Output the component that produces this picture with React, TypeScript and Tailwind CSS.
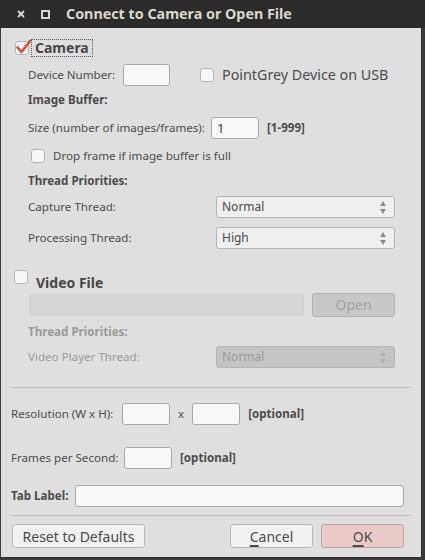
import { useState } from 'react';

const font = { fontFamily: '"Noto Sans", "DejaVu Sans", sans-serif' };

function Check({ checked, className = '' }: { checked?: boolean; className?: string }) {
	return (
		<div
			className={
				'relative w-[14px] h-[14px] rounded-[3px] border border-[#b5b5b5] bg-[#f7f7f7] shrink-0 ' + className
			}
		>
			{checked && (
				<svg className="absolute -left-[1px] -top-[3px]" width="18" height="16" viewBox="0 0 18 16">
					<path d="M2.5 8.5 L6.5 13 L15 2" fill="none" stroke="#df4a3a" strokeWidth="2.6" strokeLinecap="round" strokeLinejoin="round" />
				</svg>
			)}
		</div>
	);
}

function Field({ w, value = '' }: { w: string; value?: string }) {
	return (
		<div className={'h-[22px] shrink-0 rounded-[3px] border border-[#a9a9a9] bg-[#f8f8f8] px-[5px] text-[13px] leading-[20px] text-[#3c3c3c] ' + w}>
			{value}
		</div>
	);
}

function Combo({ value, disabled }: { value: string; disabled?: boolean }) {
	const c = disabled ? '#b0b0b0' : '#8a8a8a';
	return (
		<div
			className={
				'ml-auto w-[179px] h-[22px] rounded-[3px] border flex items-center px-[5px] text-[12px] ' +
				(disabled ? 'bg-[#c4c4c4] border-[#b4b4b4] text-[#9c9c9c]' : 'bg-[#efefef] border-[#b3b3b3] text-[#4a4a4a]')
			}
		>
			<span>{value}</span>
			<div className="ml-auto flex flex-col items-center gap-[3px] mr-[3px]">
				<svg width="6" height="5" viewBox="0 0 6 5">
					<path d="M3 0 L6 5 L0 5 Z" fill={c} />
				</svg>
				<svg width="6" height="5" viewBox="0 0 6 5">
					<path d="M0 0 L6 0 L3 5 Z" fill={c} />
				</svg>
			</div>
		</div>
	);
}

function Button({ children, className = '' }: { children: React.ReactNode; className?: string }) {
	return (
		<div
			className={
				'h-[24px] rounded-[3px] border flex items-center justify-center text-[14px] ' + className
			}
		>
			{children}
		</div>
	);
}

export default function App() {
	const [tab] = useState('');
	return (
		<div className="w-[425px] h-[560px] bg-[#3a3a3a] overflow-hidden" style={font}>
			{/* title bar */}
			<div className="h-[28px] bg-[#2b2b2b] flex items-center text-[#dcdcdc]">
				<svg className="ml-[17px]" width="8" height="8" viewBox="0 0 8 8">
					<path d="M1 1 L7 7 M7 1 L1 7" stroke="#dcdcdc" strokeWidth="1.8" />
				</svg>
				<div className="ml-[16px] w-[9px] h-[9px] border-[2px] border-[#d8d8d8]" />
				<span className="ml-[16px] text-[14.3px] font-bold text-[#dcd7cc]">
					Connect to Camera or Open File
				</span>
			</div>

			<div className="ml-[1px] mr-[3px] h-[530px] bg-[#dfdfdf] flex flex-col text-[11.6px] whitespace-nowrap text-[#4c4c4c] border-r border-b border-[#2e2e2e]">
				{/* camera */}
				<div className="mt-[11px] h-[18px] flex items-center pl-[14px]">
					<Check checked />
					<span className="ml-[2px] px-[3px] border border-dotted border-[#555] text-[14px] font-bold leading-[16px] text-[#474747]">
						Camera
					</span>
				</div>

				<div className="mt-[7px] h-[22px] flex items-center pl-[27px]">
					<span className="w-[95px]">Device Number:</span>
					<Field w="w-[47px]" />
					<Check className="ml-[30px]" />
					<span className="ml-[8px] text-[14.3px]">PointGrey Device on USB</span>
				</div>

				<div className="mt-[6px] h-[16px] flex items-center pl-[27px] font-bold">Image Buffer:</div>

				<div className="mt-[9px] h-[22px] flex items-center pl-[27px]">
					<span className="w-[183px]">Size (number of images/frames):</span>
					<Field w="w-[48px]" value="1" />
					<span className="ml-[8px] font-bold">[1-999]</span>
				</div>

				<div className="mt-[9px] h-[16px] flex items-center pl-[30px]">
					<Check />
					<span className="ml-[8px]">Drop frame if image buffer is full</span>
				</div>

				<div className="mt-[9px] h-[16px] flex items-center pl-[27px] font-bold">Thread Priorities:</div>

				<div className="mt-[7px] h-[22px] flex items-center pl-[27px] pr-[26px]">
					<span>Capture Thread:</span>
					<Combo value="Normal" />
				</div>

				<div className="mt-[9px] h-[22px] flex items-center pl-[27px] pr-[26px]">
					<span>Processing Thread:</span>
					<Combo value="High" />
				</div>

				{/* video file */}
				<div className="mt-[23px] h-[20px] flex items-center pl-[13px]">
					<Check className="self-start -mt-[2px]" />
					<span className="ml-[8px] text-[14px] font-bold text-[#474747]">Video File</span>
				</div>

				<div className="mt-[1px] h-[23px] flex items-center pl-[28px] pr-[26px]">
					<div className="flex-1 h-[22px] rounded-[3px] border border-[#d0d0d0] bg-[#d5d5d5]" />
					<Button className="ml-[8px] w-[83px] bg-[#c8c8c8] border-[#b0b0b0] text-[#a2a2a2]">Open</Button>
				</div>

				<div className="mt-[8px] h-[16px] flex items-center pl-[27px] font-bold text-[#9a9a9a]">Thread Priorities:</div>

				<div className="mt-[6px] h-[22px] flex items-center pl-[27px] pr-[26px] text-[#9a9a9a]">
					<span>Video Player Thread:</span>
					<Combo value="Normal" disabled />
				</div>

				<div className="mt-[19px] mx-[10px] h-[1px] bg-[#bdbdbd] shrink-0" />

				<div className="mt-[15px] h-[22px] flex items-center pl-[10px]">
					<span className="w-[111px]">Resolution (W x H):</span>
					<Field w="w-[48px]" />
					<span className="ml-[8px]">x</span>
					<Field w="ml-[8px] w-[48px]" />
					<span className="ml-[8px] font-bold">[optional]</span>
				</div>

				<div className="mt-[22px] h-[22px] flex items-center pl-[10px]">
					<span className="w-[113px]">Frames per Second:</span>
					<Field w="w-[48px]" />
					<span className="ml-[8px] font-bold">[optional]</span>
				</div>

				<div className="mt-[16px] h-[22px] flex items-center pl-[10px] pr-[17px]">
					<span className="font-bold">Tab Label:</span>
					<div className="ml-[7px] flex-1">
						<Field w="w-full" value={tab} />
					</div>
				</div>

				<div className="mt-[8px] mx-[10px] h-[1px] bg-[#bdbdbd] shrink-0" />

				<div className="mt-[8px] flex items-center pl-[11px] pr-[17px]">
					<Button className="w-[133px] bg-[#f1f1f1] border-[#b8b8b8] text-[#4a4a4a]">Reset to Defaults</Button>
					<Button className="ml-auto w-[83px] bg-[#f1f1f1] border-[#b8b8b8] text-[#4a4a4a]">
						<span className="underline underline-offset-[3px] decoration-[2px]">C</span>ancel
					</Button>
					<Button className="ml-[8px] w-[83px] bg-[#e9cac7] border-[#bfa3a0] text-[#4a4a4a]">
						<span className="underline underline-offset-[3px] decoration-[2px]">O</span>K
					</Button>
				</div>
			</div>
		</div>
	);
}
